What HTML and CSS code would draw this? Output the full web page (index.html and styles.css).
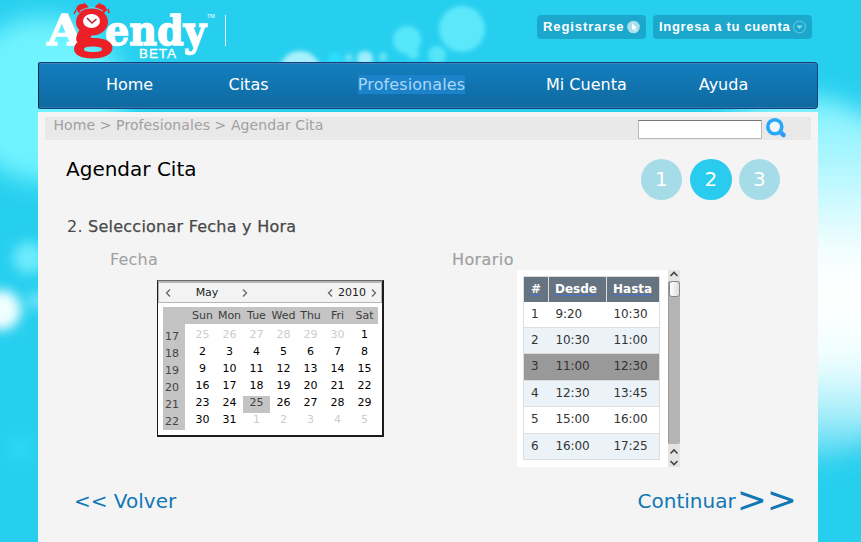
FILE: index.html
```html
<!DOCTYPE html>
<html lang="es">
<head>
<meta charset="utf-8">
<title>Agendy - Agendar Cita</title>
<link rel="stylesheet" href="styles.css">
</head>
<body>
<svg class="backdrop" width="861" height="542" viewBox="0 0 861 542" aria-hidden="true">
  <defs>
    <filter id="b2" x="-50%" y="-50%" width="200%" height="200%"><feGaussianBlur stdDeviation="2"/></filter>
    <filter id="b6" x="-50%" y="-50%" width="200%" height="200%"><feGaussianBlur stdDeviation="6"/></filter>
    <filter id="b12" x="-50%" y="-50%" width="200%" height="200%"><feGaussianBlur stdDeviation="12"/></filter>
    <linearGradient id="glow" x1="0" y1="0" x2="0" y2="1">
      <stop offset="0" stop-color="#7df2ff"/>
      <stop offset=".2" stop-color="#b4f7ff"/>
      <stop offset=".42" stop-color="#f4feff"/>
      <stop offset=".55" stop-color="#fff"/>
      <stop offset=".72" stop-color="#effeff"/>
      <stop offset=".86" stop-color="#a9effa"/>
      <stop offset="1" stop-color="#3ed3f0"/>
    </linearGradient>
  </defs>
  <rect width="861" height="542" fill="#27cfef"/>
  <circle cx="42" cy="99" r="82" fill="#70f3ff" filter="url(#b12)"/>
  <circle cx="29" cy="258" r="16" fill="#6cebfd" filter="url(#b6)"/>
  <circle cx="36" cy="301" r="9" fill="#6ce5f8" filter="url(#b6)"/>
  <circle cx="1" cy="310" r="20" fill="#f0ffff" filter="url(#b6)"/>
  <circle cx="20" cy="448" r="14" fill="#29d5f4" filter="url(#b6)"/>
  <g filter="url(#b2)">
    <circle cx="300" cy="72" r="21" fill="#a8f1fc"/>
    <circle cx="335" cy="59" r="7" fill="#29defb"/>
    <circle cx="365" cy="59" r="8" fill="#9deffb"/>
    <circle cx="383" cy="57" r="4" fill="#6fe5f7"/>
    <circle cx="349" cy="58" r="4" fill="#6fe5f7"/>
    <circle cx="407" cy="40" r="14" fill="#57e7fa"/>
    <circle cx="413" cy="53" r="6" fill="#57e7fa"/>
    <circle cx="437" cy="55" r="9" fill="#55e5f9"/>
    <circle cx="462" cy="29" r="23" fill="#5be8fb"/>
  </g>
  <ellipse cx="800" cy="280" rx="150" ry="184" fill="url(#glow)" filter="url(#b12)"/>
</svg>
<div class="page">
  <header class="top">
    <svg class="logo" width="182" height="62" viewBox="0 0 182 62">
      <g class="slab">
        <text x="9" y="44.500" font-size="42" textLength="35" lengthAdjust="spacingAndGlyphs">A</text>
        <text x="67" y="44.500" font-size="41" textLength="101" lengthAdjust="spacingAndGlyphs">endy</text>
      </g>
      <g fill="#ed1f27">
        <ellipse cx="54" cy="22" rx="16" ry="13.500"/>
        <path d="M42 29q-9 14 3 16l20 1q4-6-2-7l-9-1q-3-1 1-4z"/>
        <path d="M55 38c13 0 19.500 4 19.500 10s-8 10.500-20 10.500-18.500-4-18.500-9.500 6-11 19-11zm0 8.500c-6 0-9 1-9 2.700s3 2.800 9 2.800 9-1 9-2.800-3-2.700-9-2.700z" fill-rule="evenodd"/>
        <path d="M38 9q2-7 11-4l2 3-10 5z"/>
        <path d="M58 5q9-3 11 5l-3 3-9-5z"/>
      </g>
      <path d="M46 3l2 3M62 3l-2 3M38 10l-2 4M70 9l1 4" fill="none" stroke="#ed1f27" stroke-width="1.500"/>
      <path d="M42 11q11-7 23 0" fill="none" stroke="#5fdcf0" stroke-width="1"/>
      <ellipse cx="53.500" cy="21" rx="8.500" ry="7" fill="#fff"/>
      <path d="M49 18l5 5 4.500-4" fill="none" stroke="#b52531" stroke-width="1.600"/>
      <text class="beta" x="101" y="58" textLength="37">BETA</text>
      <text class="tm" x="169" y="18">TM</text>
    </svg>
    <span class="rule"></span>
    <div class="account">
      <a class="pill">Registrarse
        <svg width="13" height="14" viewBox="0 0 13 14"><circle cx="6.500" cy="7" r="6.300" fill="#a9dfea"/><path d="M5 3v7l1.700-1.500L7.900 11l1.200-.6L8 8h2z" fill="#fff"/></svg>
      </a>
      <a class="pill">Ingresa a tu cuenta
        <svg width="13" height="14" viewBox="0 0 13 14"><circle cx="6.500" cy="7" r="5.900" fill="none" stroke="#6dcbe0"/><path d="M3.300 5.500h6.400L6.500 9z" fill="#8fdcec"/></svg>
      </a>
    </div>
  </header>
  <nav class="menu">
    <a>Home</a><a>Citas</a><a><span class="current">Profesionales</span></a><a>Mi Cuenta</a><a>Ayuda</a>
  </nav>
  <main class="content">
    <div class="crumbs">
      <span>Home &gt; Profesionales &gt; Agendar Cita</span>
      <div class="search">
        <input type="text" aria-label="Buscar">
        <svg width="22" height="22" viewBox="0 0 22 22"><path d="M14 14l4.500 4" stroke="#2f9cf5" stroke-width="4.500" stroke-linecap="round"/><circle cx="9.800" cy="9.800" r="7" fill="#f4f8fb" stroke="#27a8f8" stroke-width="3.600"/></svg>
      </div>
    </div>
    <div class="heading">
      <h1>Agendar Cita</h1>
      <div class="steps"><span>1</span><span class="on">2</span><span>3</span></div>
    </div>
    <h2>2. <span>Seleccionar Fecha y Hora</span></h2>
    <div class="pickers">
      <section class="date">
        <h3>Fecha</h3>
        <div class="calendar">
          <div class="calbar">
            <svg width="6" height="8" viewBox="0 0 6 8"><path d="M5 .5L1.500 4 5 7.500"/></svg>
            <span class="month">May</span>
            <svg width="6" height="8" viewBox="0 0 6 8"><path d="M1 .5L4.500 4 1 7.500"/></svg>
            <svg class="prev" width="6" height="8" viewBox="0 0 6 8"><path d="M5 .5L1.500 4 5 7.500"/></svg>
            <span class="year">2010</span>
            <svg width="6" height="8" viewBox="0 0 6 8"><path d="M1 .5L4.500 4 1 7.500"/></svg>
          </div>
          <div class="days">
            <b></b><i>Sun</i><i>Mon</i><i>Tue</i><i>Wed</i><i>Thu</i><i>Fri</i><i>Sat</i>
            <b>17</b><s>25</s><s>26</s><s>27</s><s>28</s><s>29</s><s>30</s><span>1</span>
            <b>18</b><span>2</span><span>3</span><span>4</span><span>5</span><span>6</span><span>7</span><span>8</span>
            <b>19</b><span>9</span><span>10</span><span>11</span><span>12</span><span>13</span><span>14</span><span>15</span>
            <b>20</b><span>16</span><span>17</span><span>18</span><span>19</span><span>20</span><span>21</span><span>22</span>
            <b>21</b><span>23</span><span>24</span><span class="picked">25</span><span>26</span><span>27</span><span>28</span><span>29</span>
            <b>22</b><span>30</span><span>31</span><s>1</s><s>2</s><s>3</s><s>4</s><s>5</s>
          </div>
        </div>
      </section>
      <section class="time">
        <h3>Horario</h3>
        <div class="slots">
          <table>
            <thead><tr><th><u>#</u></th><th><u>Desde</u></th><th><u>Hasta</u></th></tr></thead>
            <tbody>
              <tr><td>1</td><td>9:20</td><td>10:30</td></tr>
              <tr><td>2</td><td>10:30</td><td>11:00</td></tr>
              <tr class="chosen"><td>3</td><td>11:00</td><td>12:30</td></tr>
              <tr><td>4</td><td>12:30</td><td>13:45</td></tr>
              <tr><td>5</td><td>15:00</td><td>16:00</td></tr>
              <tr><td>6</td><td>16:00</td><td>17:25</td></tr>
            </tbody>
          </table>
          <div class="scroll">
            <svg width="12" height="11" viewBox="0 0 12 11"><path d="M2.500 6L6 2.500 9.500 6"/></svg>
            <div class="track"><div class="thumb"></div></div>
            <svg width="12" height="23" viewBox="0 0 12 23"><path d="M2.500 9.500L6 6l3.500 3.500M2.500 17L6 20.500 9.500 17"/></svg>
          </div>
        </div>
      </section>
    </div>
    <footer class="pager"><a>&lt;&lt; Volver</a><a class="next">Continuar<span>&gt;&gt;</span></a></footer>
  </main>
</div>
</body>
</html>
```
FILE: styles.css
```css
* { box-sizing: border-box; }
body { margin: 0; width: 861px; height: 542px; overflow: hidden; background: #27cfef; font-family: "DejaVu Sans", sans-serif; }
h1, h2, h3 { margin: 0; font-weight: normal; }
.backdrop { position: absolute; left: 0; top: 0; }
.page { position: relative; width: 780px; height: 542px; margin-left: 38px; display: flex; flex-direction: column; }

.top { height: 62px; display: flex; align-items: flex-start; }
.logo { flex: none; }
.slab { font-family: "DejaVu Serif", serif; font-weight: bold; fill: #fff; stroke: #fff; stroke-width: 1.4; }
.beta { font: 13.500px "Liberation Sans", sans-serif; fill: #fff; stroke: #fff; stroke-width: .3; }
.tm { font: 5.500px "Liberation Sans", sans-serif; fill: #fff; }
.rule { width: 1px; height: 31px; margin: 15px 0 0 5px; background: #e9fbff; }
.account { display: flex; gap: 7px; margin: 15px 6px 0 auto; }
.pill { display: flex; align-items: center; justify-content: space-between; height: 24px; padding: 0 6px 2px; border-radius: 4px; background: #1ca7cd; color: #fff; font: bold 13px "Liberation Sans", sans-serif; letter-spacing: .9px; white-space: nowrap; }
.pill svg { flex: none; position: relative; top: 1px; }
.pill:first-child { width: 109px; }
.pill:last-child { width: 159px; letter-spacing: .68px; }

.menu { height: 47px; flex: none; display: grid; grid-template-columns: 181px 57px 269px 79px 1fr; border: 1px solid #113f80; border-left-color: #0a2749; border-radius: 2px 4px 4px 2px; background: linear-gradient(#137fc0, #0f699f); box-shadow: inset 0 1px #3c83b9, inset 0 -1px #2f7ab3; color: #fff; font-size: 16px; line-height: 43px; text-align: center; white-space: nowrap; }
.menu a:last-child { padding-left: 5px; }
.current { background: #1c83cb; color: #a9d7f7; letter-spacing: .1px; }

.content { margin-top: 3px; height: 430px; background: #f4f4f4; display: flex; flex-direction: column; }
.crumbs { height: 23px; flex: none; margin: 5px 7px 0; padding: 0 24px 0 8.500px; background: #e9e9e9; color: #a0a0a0; display: flex; justify-content: space-between; font-size: 14px; line-height: 17px; letter-spacing: .09px; }
.search { display: flex; gap: 3px; }
.search input { width: 124px; height: 19px; margin-top: 3px; border: 1px solid #bbb; border-top: 1px solid #777; background: #fff; padding: 0; }
.heading { display: flex; justify-content: space-between; padding: 18.500px 38px 0 28px; height: 61px; flex: none; }
h1 { font-size: 20px; line-height: 21px; }
.steps { display: flex; gap: 7px; }
.steps span { width: 41.500px; height: 41.500px; border-radius: 50%; background: #a6dce8; color: #fff; font-size: 20px; line-height: 41px; text-align: center; }
.steps span:first-child { margin-right: 1px; }
.steps .on { background: #29ccee; }
h2 { height: 32px; flex: none; margin: 15px 0 0 29px; font-size: 16px; line-height: 21px; letter-spacing: .24px; color: #484848; }
h2 span { -webkit-text-stroke: .25px #484848; }
h3 { font-size: 16px; line-height: 20px; color: #a0a0a0; }
.pickers { display: flex; height: 236px; flex: none; }
.date { width: 414px; padding: 1px 0 0 72px; }
.date h3 { line-height: 21px; height: 20px; letter-spacing: .2px; }
.time h3 { margin-top: 2px; letter-spacing: .4px; -webkit-text-stroke: .2px #a0a0a0; }

.calendar { width: 227px; height: 157px; margin: 11px 0 0 47px; border: solid #1c1c1c; border-width: 0 2px 2px 1px; border-top: 1px solid #666; background: #fff; font-size: 11px; }
.calbar { height: 22px; border: 2px solid #b5b5b5; border-width: 2px 1px 1px; background: #f3f3f3; display: flex; align-items: center; padding: 0 4px 0 6px; color: #222; }
.calbar svg { fill: none; stroke: #666; stroke-width: 1.300; }
.month { width: 71px; text-align: center; padding-left: 1px; }
.prev { margin-left: auto; margin-right: 5px; }
.year { margin-right: 5px; }
.days { display: grid; grid-template-columns: 22px repeat(7, 27px); grid-template-rows: 17px repeat(6, 17px); width: 215px; margin: 4px 0 0 5px; background: linear-gradient(#c4c4c4, #c4c4c4) 0 0 / 100% 17px no-repeat, linear-gradient(#c4c4c4, #c4c4c4) 0 0 / 22px 100% no-repeat; height: 123px; row-gap: 0; text-align: center; line-height: 17px; }
.days b { font-weight: normal; color: #444; padding: 4px 4px 0 0; }
.days i, .days s, .days span { font-style: normal; text-decoration: none; position: relative; left: 4px; line-height: 13px; height: 17px; margin-top: 4px; }
.days i { margin: 0; left: 4px; line-height: 17px; color: #3c3c3c; }
.days s { color: #ccc; }
.days .picked { background: #c4c4c4; color: #444; }

.slots { width: 163px; height: 197px; margin-left: 65px; display: flex; background: #fff; }
table { width: 137px; height: 184px; margin: 6px 8px 0 6px; border-collapse: collapse; table-layout: fixed; font-size: 12px; flex: none; border: 1px solid #ddd; }
th { height: 25px; background: #667482; color: #fff; padding: 0 0 1px 6px; text-align: left; border-left: 1px solid #ddd; }
th:nth-child(1), td:nth-child(1) { width: 25px; padding-left: 7px; }
th:nth-child(2) { width: 58px; }
u { text-decoration-color: #4a70d0; text-underline-offset: 2px; text-decoration-skip-ink: none; text-decoration-thickness: 1px; }
td { padding: 0 0 1px 7px; color: #333; border-bottom: 1px solid #ddd; letter-spacing: -.1px; }
tbody tr:nth-child(even) { background: #ebf3f9; }
.chosen { background: #999; }
.scroll { width: 12px; display: flex; flex-direction: column; background: #e4e4e4; }
.scroll svg { fill: none; stroke: #444; stroke-width: 1.600; }
.track { flex: 1; background: #b5b5b5; border-left: 1px solid #999; border-radius: 2px; }
.thumb { width: 11px; height: 16px; border: 1px solid #888; border-radius: 3px; background: linear-gradient(90deg, #fff, #ddd); }

.pager { display: flex; justify-content: space-between; padding: 0 21px 0 36px; margin-top: -5px; color: #1177b5; font-size: 20px; line-height: 44px; height: 44px; }
.next { display: flex; }
.next span { font-size: 36px; line-height: 41px; margin-left: 1px; }
```
